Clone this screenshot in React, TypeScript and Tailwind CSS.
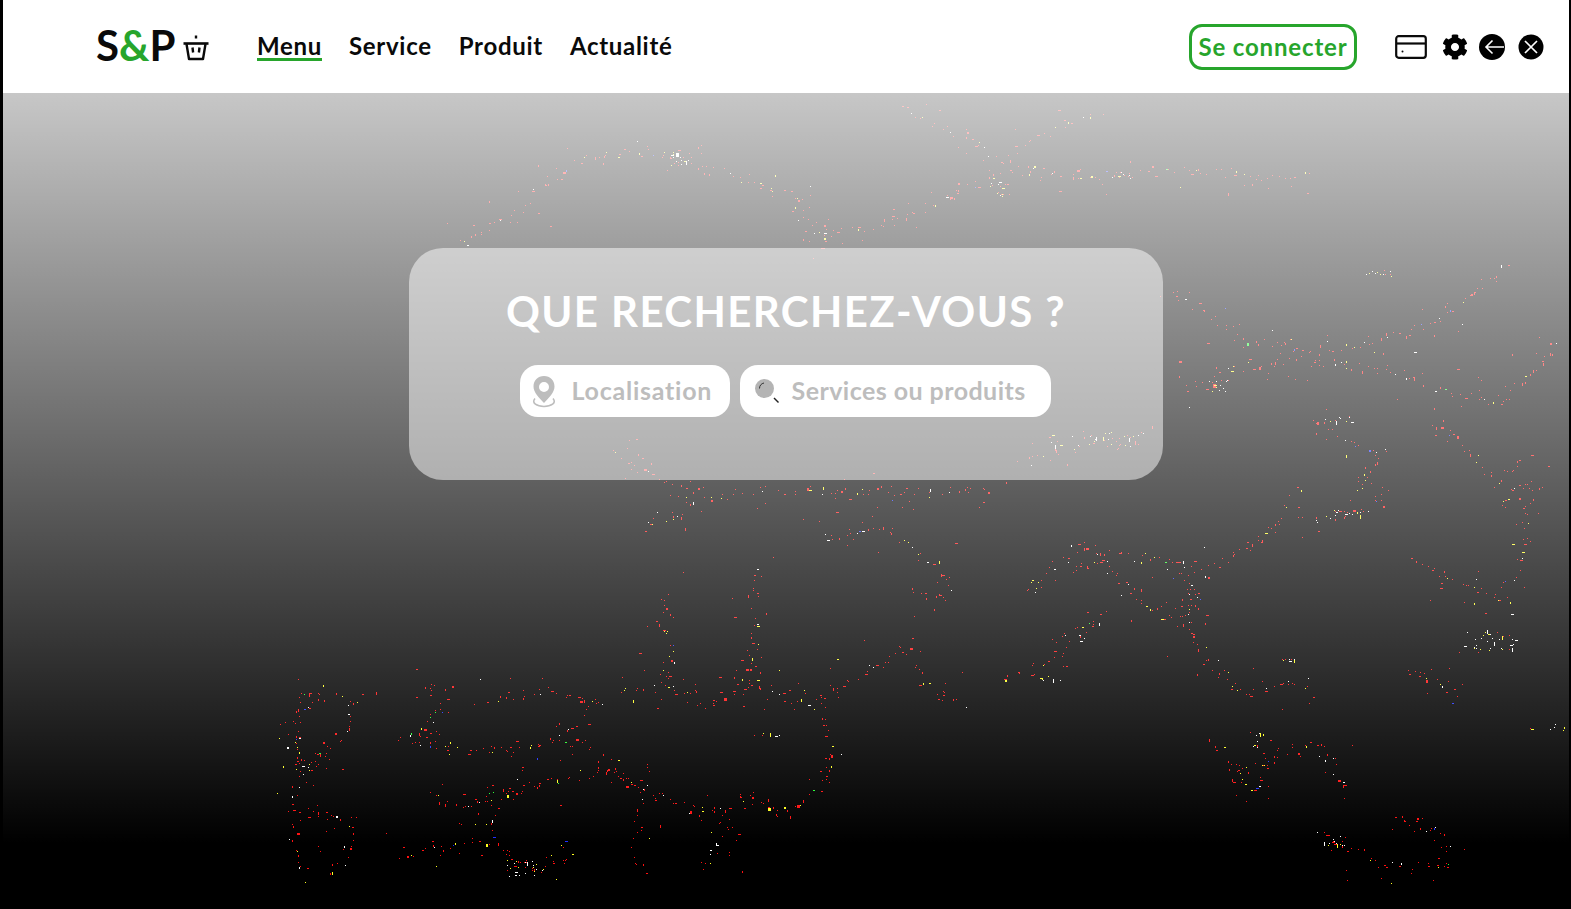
import React from 'react';
import { FaCog } from 'react-icons/fa';

type Pt = [number, number];

// hand-traced lines of the night map behind the hero (page coords, hero starts at y=93)
const ROADS: Pt[][] = [
    [[298, 695], [315, 690], [322, 700], [300, 705], [296, 735], [300, 765], [318, 770], [330, 750]],
    [[420, 683], [440, 690], [445, 700], [430, 720], [425, 745]],
    [[480, 700], [540, 692], [560, 693], [600, 700], [560, 735], [540, 745], [505, 750], [478, 750], [450, 750], [420, 740], [395, 735]],
    [[296, 810], [325, 812], [345, 820], [350, 830], [345, 860], [325, 875]],
    [[300, 745], [296, 790], [296, 850], [308, 880]],
    [[345, 695], [352, 715], [340, 740], [298, 775]],
    [[425, 790], [450, 805], [470, 805], [510, 790], [560, 780], [600, 770], [620, 775], [650, 790], [680, 805], [720, 812], [730, 830], [700, 870]],
    [[510, 790], [495, 800], [490, 840], [430, 845], [400, 855]],
    [[490, 840], [520, 865], [540, 870], [570, 855], [560, 840]],
    [[630, 780], [640, 800], [632, 870]],
    [[630, 780], [590, 750], [560, 735]],
    [[820, 690], [830, 740], [825, 780], [800, 805], [780, 815], [750, 795], [720, 812]],
    [[620, 690], [660, 685], [705, 705], [750, 680], [800, 705], [880, 665], [905, 650], [930, 690], [965, 705]],
    [[1005, 680], [1050, 660], [1100, 620], [1050, 640]],
    [[670, 590], [660, 620], [670, 650], [665, 690]],
    [[755, 560], [755, 620], [750, 680], [740, 700]],
    [[820, 520], [830, 540], [880, 530], [910, 545], [950, 580], [940, 600], [910, 590]],
    [[640, 530], [700, 500], [760, 490], [850, 490], [990, 490]],
    [[1025, 595], [1045, 570], [1085, 550], [1150, 560], [1180, 565], [1220, 565], [1255, 540], [1280, 520], [1290, 495]],
    [[1070, 570], [1100, 560], [1130, 590], [1150, 610], [1180, 625], [1190, 610], [1195, 585]],
    [[1180, 565], [1195, 600], [1190, 625], [1200, 650], [1215, 670], [1250, 695], [1290, 680], [1310, 690]],
    [[1390, 490], [1360, 510], [1300, 520]],
    [[1405, 670], [1440, 680], [1460, 695]],
    [[1215, 745], [1240, 770], [1290, 750], [1320, 740], [1335, 770], [1345, 790]],
    [[1315, 830], [1340, 845], [1390, 865], [1450, 865], [1440, 830], [1415, 820], [1390, 820]],
    [[1225, 780], [1260, 790], [1265, 750]],
    [[460, 240], [520, 210], [560, 170], [610, 150], [680, 155], [740, 180], [800, 200], [830, 240]],
    [[800, 240], [900, 220], [960, 190], [1010, 170], [1100, 175], [1200, 170], [1300, 180]],
    [[900, 110], [950, 130], [1000, 160], [1050, 130], [1100, 110]],
    [[1170, 290], [1220, 320], [1250, 340], [1330, 350], [1380, 340], [1440, 320], [1500, 270]],
    [[1180, 390], [1230, 370], [1300, 360], [1400, 370], [1440, 390], [1500, 400], [1560, 345]],
    [[1310, 420], [1380, 460], [1350, 500]],
    [[1430, 420], [1500, 480], [1530, 450]],
    [[1020, 460], [1120, 440], [1150, 430]],
    [[1500, 500], [1530, 480], [1520, 560], [1500, 600], [1410, 560]],
    [[610, 450], [640, 470], [700, 490]],
];

// small bright patches (towns)
const TOWNS: [number, number, number, number, number][] = [
    [1458, 630, 58, 22, 34], [1525, 724, 40, 6, 8], [1362, 270, 34, 6, 12], [1322, 416, 30, 6, 10],
    [1332, 510, 40, 6, 14], [1246, 732, 16, 16, 10], [745, 732, 36, 4, 6], [670, 148, 24, 18, 20],
    [990, 180, 20, 16, 14], [1106, 172, 24, 6, 8], [505, 860, 32, 16, 24], [1322, 835, 24, 12, 16],
    [1040, 676, 24, 4, 6], [1270, 658, 26, 4, 8], [1205, 378, 24, 14, 14], [1050, 432, 90, 14, 26],
];

const makeDots = () => {
    let seed = 1337;
    const rnd = () => {
        seed = (seed * 16807) % 2147483647;
        return seed / 2147483647;
    };
    const pick = () => {
        const r = rnd();
        if (r < 0.8) return '#ff1010';
        if (r < 0.9) return '#ffff20';
        if (r < 0.98) return '#ffffff';
        return r < 0.99 ? '#2030ff' : '#20ff30';
    };
    const dots: { x: number; y: number; w: number; h: number; c: string }[] = [];
    const add = (x: number, y: number) => {
        dots.push({
            x: Math.round(x),
            y: Math.round(y) - 93,
            w: rnd() < 0.06 ? 3 : rnd() < 0.15 ? 2 : 1,
            h: rnd() < 0.04 ? 3 : rnd() < 0.15 ? 2 : 1,
            c: pick(),
        });
    };
    ROADS.forEach((road) => {
        for (let i = 0; i < road.length - 1; i++) {
            const [x1, y1] = road[i];
            const [x2, y2] = road[i + 1];
            const steps = Math.ceil(Math.hypot(x2 - x1, y2 - y1) / 6);
            for (let s = 0; s < steps; s++) {
                const t = (s + rnd()) / steps;
                const px = x1 + (x2 - x1) * t;
                const py = y1 + (y2 - y1) * t;
                add(px + (rnd() - 0.5) * 9, py + (rnd() - 0.5) * 9);
                // side roads wandering off the main line
                if (rnd() < 0.55) {
                    const spread = 15 + rnd() * 45;
                    add(px + (rnd() - 0.5) * spread, py + (rnd() - 0.5) * spread);
                }
            }
        }
    });
    TOWNS.forEach(([x, y, w, h, n]) => {
        for (let i = 0; i < n; i++) {
            dots.push({
                x: Math.round(x + rnd() * w),
                y: Math.round(y + rnd() * h) - 93,
                w: rnd() < 0.15 ? 3 : 1,
                h: rnd() < 0.1 ? 4 : 1,
                c: rnd() < 0.55 ? '#ffffff' : rnd() < 0.6 ? '#ffff20' : '#ff1010',
            });
        }
    });
    return dots;
};

const DOTS = makeDots();

const CityLights = () => (
    <svg className="absolute left-[-3px] top-0" width="1571" height="816" shapeRendering="crispEdges">
        {DOTS.map((d, i) => (
            <rect key={i} x={d.x} y={d.y} width={d.w} height={d.h} fill={d.c} />
        ))}
    </svg>
);

const BasketIcon = () => (
    <svg width="28" height="28" viewBox="0 0 28 28" fill="none" stroke="#0a0a0a" strokeWidth="2.4">
        <path d="M14 1.500v3" />
        <path d="M1.500 9.500h25" strokeWidth="2.6" />
        <path d="M4.500 10l2.500 15h14l2.500-15" strokeLinejoin="round" />
        <path d="M10.500 13.500l.6 5M17.500 13.500l-.6 5" />
    </svg>
);

const CardIcon = () => (
    <svg width="32" height="24" viewBox="0 0 32 24" fill="none" stroke="#0a0a0a" strokeWidth="2.2">
        <rect x="1.200" y="1.200" width="29.600" height="21.600" rx="2.500" />
        <path d="M1.200 8.500h29.600" />
        <circle cx="7.500" cy="16.500" r="1" fill="#0a0a0a" stroke="none" />
    </svg>
);

const BackIcon = () => (
    <svg width="26" height="26" viewBox="0 0 26 26" fill="none">
        <circle cx="13" cy="13" r="13" fill="#000" />
        <path d="M25 13H7M13.500 6.500L7 13l6.500 6.500" stroke="#fff" strokeWidth="1.600" />
    </svg>
);

const CloseIcon = () => (
    <svg width="26" height="26" viewBox="0 0 26 26" fill="none">
        <circle cx="13" cy="13" r="12.500" fill="#000" />
        <path d="M7 7l12 12M19 7L7 19" stroke="#fff" strokeWidth="1.700" />
    </svg>
);

const PinIcon = () => (
    <svg width="26" height="33" viewBox="0 0 26 33" fill="none">
        <path fillRule="evenodd" fill="#bdbdbd" d="M13 1C6.800 1 2.500 5.500 2.500 11.500c0 6 5.500 11 10.500 16.500 5-5.500 10.500-10.500 10.500-16.500C23.500 5.500 19.200 1 13 1zm0 6a5 5 0 110 10 5 5 0 010-10z" />
        <path d="M4 23.500c-4 4.500 2 8 9 8s13-3.500 9-8" stroke="#bdbdbd" strokeWidth="1.600" />
    </svg>
);

const SearchIcon = () => (
    <svg width="26" height="26" viewBox="0 0 26 26" fill="none">
        <circle cx="10.500" cy="10.500" r="9.500" fill="#b4b4b4" />
        <path d="M5.500 10.500c0-3 1.800-5 4.500-5.500" stroke="#333" strokeWidth="1" />
        <path d="M20 20l4.500 4.500" stroke="#222" strokeWidth="1.400" />
    </svg>
);

const NavLink = ({ label, active }: { label: string; active?: boolean }) => (
    <a className={active ? 'h-[29px] border-b-[3px] border-[#27a52c] leading-[28px]' : 'h-[29px] leading-[28px]'}>
        {label}
    </a>
);

const App: React.FC = () => {
    return (
        <div className="min-h-[909px] bg-black pl-[3px] pr-[2px] font-['Lato',sans-serif]">
            <header className="flex h-[93px] items-center bg-white pl-[93px] pr-[25px] text-[#0a0a0a]">
                <div className="flex w-[161px] items-center">
                    <span className="mb-[3px] text-[42px] font-bold leading-none">
                        S<span className="text-[#27a52c]">&amp;</span>P
                    </span>
                    <span className="ml-[7px] mt-[2px]"><BasketIcon /></span>
                </div>
                <nav className="flex gap-[27px] text-[24px] font-bold tracking-[0.7px]">
                    <NavLink label="Menu" active />
                    <NavLink label="Service" />
                    <NavLink label="Produit" />
                    <NavLink label="Actualité" />
                </nav>
                <div className="ml-auto flex items-center">
                    <button className="mr-[38px] flex h-[46px] w-[168px] items-center justify-center rounded-[13px] border-[3px] border-[#27a52c] text-[24px] font-bold tracking-[0.85px] text-[#27a52c]">
                        Se connecter
                    </button>
                    <CardIcon />
                    <FaCog className="ml-[15px] text-[26px] text-black" />
                    <span className="ml-[11px]"><BackIcon /></span>
                    <span className="ml-[13px]"><CloseIcon /></span>
                </div>
            </header>
            <main className="relative h-[816px] overflow-hidden bg-black">
                <CityLights />
                <div className="absolute inset-0 bg-linear-to-b from-white/78 to-transparent to-92%" />
                <div className="relative flex justify-center pt-[155px]">
                    <section className="flex h-[232px] w-[754px] flex-col items-center rounded-[34px] bg-white/50 pt-[38px]">
                        <h1 className="text-[42px] font-bold leading-[50px] tracking-[1.4px] text-white">QUE RECHERCHEZ-VOUS ?</h1>
                        <div className="mr-[2px] mt-[29px] flex gap-[10px] text-[25px] font-bold text-[#bdbdbd]">
                            <div className="flex h-[52px] w-[210px] items-center rounded-[18px] bg-white pl-[11px]">
                                <PinIcon />
                                <span className="ml-[15px] tracking-[0.75px]">Localisation</span>
                            </div>
                            <div className="flex h-[52px] w-[311px] items-center rounded-[18px] bg-white pl-[14px]">
                                <SearchIcon />
                                <span className="ml-[12px] tracking-[0.45px]">Services ou produits</span>
                            </div>
                        </div>
                    </section>
                </div>
            </main>
        </div>
    );
};

export default App;
